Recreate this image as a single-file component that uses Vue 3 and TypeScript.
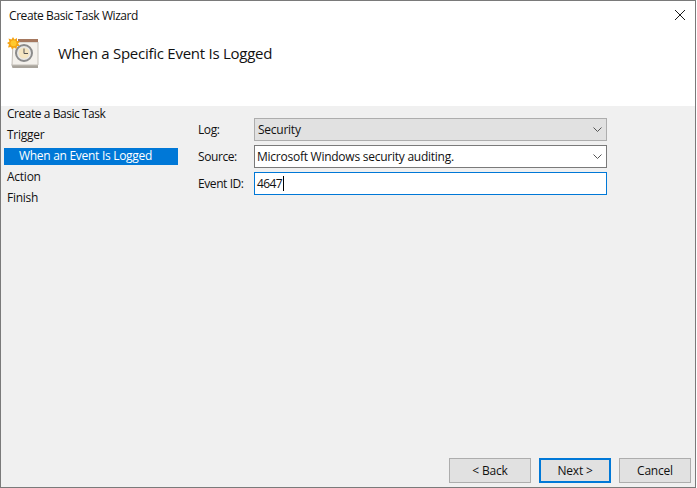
<script setup lang="ts">
const steps: { label: string; active?: boolean; tight?: boolean }[] = [
  { label: 'Create a Basic Task', tight: true },
  { label: 'Trigger' },
  { label: 'When an Event Is Logged', active: true },
  { label: 'Action' },
  { label: 'Finish' },
]
</script>

<template>
  <div class="window">
    <header class="top">
      <div class="titlebar">
        <span class="title">Create Basic Task Wizard</span>
        <svg class="close" width="12" height="12" viewBox="0 0 12 12"><path d="M1 1L11 11M11 1L1 11" stroke="#1a1a1a" stroke-width="1" fill="none" /></svg>
      </div>
      <div class="banner">
        <svg class="icon" width="32" height="32" viewBox="0 0 32 32">
          <path d="M4.500 28L6 25H31V31H5.500Z" fill="#a9a49c" />
          <path d="M6 5H31V28H5Z" fill="#f4f1ec" stroke="#c4bfb8" />
          <rect x="11" y="2" width="20" height="3" fill="#a5785f" />
          <circle cx="17" cy="16" r="8" fill="#e8e8e8" stroke="#8b8b8b" stroke-width="2" />
          <circle cx="17" cy="16" r="5.500" fill="#f4e5c2" />
          <path d="M17 11.500V16.500H21" stroke="#555" stroke-width="1" fill="none" />
          <path d="M6 0L7.500 2.500L10 1L10 4L13 4.500L11 6.500L13 9L10 9L9.500 12L7 10.500L5 12.500L4 10L1 10.500L2 7.500L0 6L2.500 4.500L1.500 1.500L4.500 2.500Z" fill="#f5a312" />
          <circle cx="6.500" cy="6.200" r="3" fill="#ffc92e" />
        </svg>
        <h1 class="heading">When a Specific Event Is Logged</h1>
      </div>
    </header>
    <main class="body">
      <nav class="steps">
        <div v-for="s in steps" :key="s.label" class="step" :class="{ active: s.active, tight: s.tight }">{{ s.label }}</div>
      </nav>
      <form class="form">
        <label class="lbl">Log:</label>
        <div class="field disabled">
          <span class="value">Security</span>
          <svg class="chev" width="9" height="6" viewBox="0 0 9 6"><path d="M0.500 0.500L4.500 4.500L8.500 0.500" stroke="#555" fill="none" /></svg>
        </div>
        <label class="lbl">Source:</label>
        <div class="field combo">
          <span class="value">Microsoft Windows security auditing.</span>
          <svg class="chev" width="9" height="6" viewBox="0 0 9 6"><path d="M0.500 0.500L4.500 4.500L8.500 0.500" stroke="#555" fill="none" /></svg>
        </div>
        <label class="lbl">Event ID:</label>
        <div class="field focus">
          <span class="value digits">4647</span><span class="caret"></span>
        </div>
      </form>
    </main>
    <footer class="footer">
      <button type="button" class="btn back">&lt; Back</button>
      <button type="button" class="btn primary">Next &gt;</button>
      <button type="button" class="btn">Cancel</button>
    </footer>
  </div>
</template>

<style>
html, body { background: #fff; }
</style>

<style scoped>
.window {
  box-sizing: border-box;
  width: 696px;
  height: 488px;
  border: 1px solid #7a7a7a;
  display: flex;
  flex-direction: column;
  background: #f0f0f0;
  font-family: "Open Sans", "Noto Sans", sans-serif;
  font-size: 12px;
  color: #111;
}
.top {
  height: 105px;
  background: #fff;
  flex: none;
}
.titlebar {
  height: 28px;
  display: flex;
  align-items: center;
  justify-content: space-between;
  padding: 0 9px 0 8px;
}
.title {
  letter-spacing: -0.42px;
}
.banner {
  display: flex;
  align-items: flex-start;
  padding: 8px 0 0 6px;
}
.icon { flex: none; }
.heading {
  margin: 4px 0 0 19px;
  font-size: 15px;
  font-weight: 400;
  letter-spacing: -0.26px;
  line-height: 24px;
}
.body {
  flex: 1;
  display: flex;
  min-height: 0;
}
.steps {
  width: 174px;
  margin-left: 3px;
  display: flex;
  flex-direction: column;
  gap: 4px;
  flex: none;
}
.step {
  height: 17px;
  line-height: 16px;
  padding-left: 3px;
  letter-spacing: -0.25px;
}
.step.tight { letter-spacing: -0.46px; }
.step.active {
  background: #0078d7;
  color: #fff;
  padding-left: 15px;
  letter-spacing: -0.29px;
}
.form {
  margin: 12px 0 0 20px;
  display: grid;
  grid-template-columns: 56px 353px;
  grid-auto-rows: 23px;
  row-gap: 4px;
  align-items: center;
}
.lbl { letter-spacing: -0.42px; }
.field {
  box-sizing: border-box;
  height: 23px;
  display: flex;
  align-items: center;
  justify-content: space-between;
  padding: 0 4px 0 2px;
  letter-spacing: -0.25px;
  background: #fff;
}
.disabled { background: #e1e1e1; border: 1px solid #adadad; }
.disabled .value { margin-left: 1px; }
.combo { border: 1px solid #7a7a7a; }
.focus { border: 1px solid #0078d7; justify-content: flex-start; }
.digits { letter-spacing: -0.6px; }
.caret {
  display: inline-block;
  width: 1px;
  height: 15px;
  background: #000;
  margin-left: 1px;
}
.footer {
  flex: none;
  height: 29px;
  display: flex;
  justify-content: flex-end;
  align-items: flex-start;
  gap: 8px;
  padding-right: 4px;
}
.btn {
  box-sizing: border-box;
  width: 72px;
  height: 25px;
  padding: 0;
  background: #e1e1e1;
  border: 1px solid #adadad;
  border-radius: 0;
  font: inherit;
  color: #111;
  letter-spacing: -0.2px;
}
.btn.back { width: 82px; }
.btn.primary { border: 2px solid #0078d7; }
</style>
